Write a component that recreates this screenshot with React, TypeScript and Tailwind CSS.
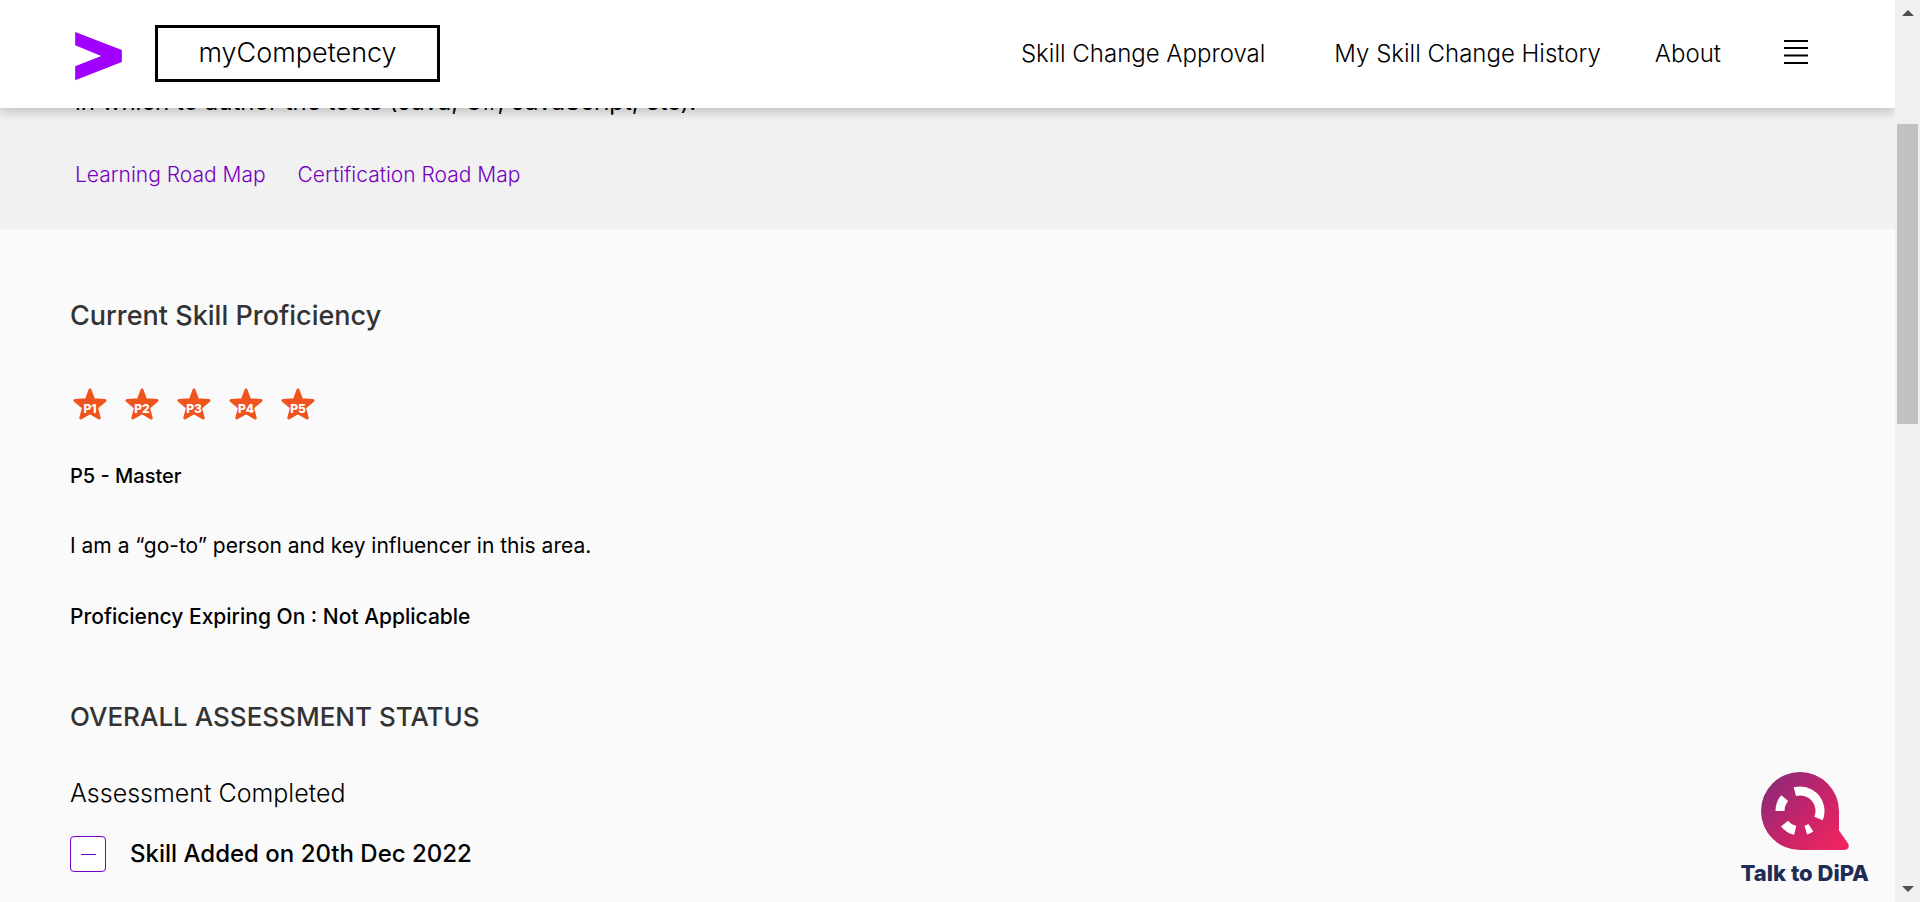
const levels = ["P1", "P2", "P3", "P4", "P5"];

function Logo() {
  return (
    <svg viewBox="0 -21 140 171" className="h-[57px] w-[47px]" aria-hidden="true">
      <path d="M0 0 140 54v36L0 145v-42l78-31L0 40Z" fill="#a100ff" />
    </svg>
  );
}

function Star({ label }: { label: string }) {
  return (
    <svg viewBox="0 0 40 32" className="h-8 w-10" role="img" aria-label={label}>
      <path
        d="M20 2 23.6 11.8 35 12.6 26.5 19.6 29.2 30 20 24.6 10.8 30 13.5 19.6 5 12.6 16.4 11.8Z"
        fill="#f0541e"
        stroke="#f0541e"
        strokeWidth="3"
        strokeLinejoin="round"
      />
      <text x="20" y="25" textAnchor="middle" fill="#fff" className="font-['Inter'] text-[12px] font-extrabold">
        {label}
      </text>
    </svg>
  );
}

function DipaIcon() {
  return (
    <svg viewBox="0 0 88 78" className="h-[78px] w-[88px]" aria-hidden="true">
      <defs>
        <linearGradient id="dipa" x1="8" y1="10" x2="78" y2="76" gradientUnits="userSpaceOnUse">
          <stop offset="0" stopColor="#8f2a78" />
          <stop offset="0.5" stopColor="#c6246a" />
          <stop offset="1" stopColor="#ee2660" />
        </linearGradient>
      </defs>
      <path
        d="M39 0A39 39 0 0 1 78 39V58.500L86.800 71Q88.600 74.200 87.200 76.200Q86 78 83 78H39A39 39 0 0 1 39 0Z"
        fill="url(#dipa)"
      />
      <circle
        cx="39"
        cy="39"
        r="20"
        fill="none"
        stroke="#fff"
        strokeWidth="9"
        pathLength="360"
        strokeDasharray="127 35 16 31 37 39 40 35"
        transform="rotate(-105 39 39)"
      />
    </svg>
  );
}

function Scrollbar() {
  return (
    <div className="flex w-[25px] shrink-0 flex-col items-center justify-between bg-[#f0f0f0] py-[10px]" aria-hidden="true">
      <svg viewBox="0 0 12 6" className="h-[6px] w-3"><path d="M6 0 12 6H0Z" fill="#505050" /></svg>
      <div className="flex w-full grow justify-center pt-[108px]">
        <div className="h-[300px] w-[21px] bg-[#c1c1c1]" />
      </div>
      <svg viewBox="0 0 12 6" className="h-[6px] w-3"><path d="M0 0H12L6 6Z" fill="#505050" /></svg>
    </div>
  );
}

export default function App() {
  return (
    <div className="flex h-screen overflow-hidden bg-[#fafafa] font-['Inter',sans-serif] text-black">
      <div className="relative flex min-w-0 grow flex-col overflow-hidden">
        <header className="relative z-10 flex h-[108px] shrink-0 items-center justify-between bg-white pr-[87px] pb-px pl-[75px] shadow-[0_4px_10px_rgba(0,0,0,0.2)]">
          <div className="flex items-center gap-[33px]">
            <Logo />
            <a href="#home" className="flex h-[57px] w-[285px] items-center justify-center border-3 border-black text-[27px] font-light">
              myCompetency
            </a>
          </div>
          <nav className="flex items-center text-[24px] font-light whitespace-nowrap">
            <a href="#approval" className="mr-[69px]">Skill Change Approval</a>
            <a href="#history" className="mr-[54px]">My Skill Change History</a>
            <a href="#about" className="mr-[63px]">About</a>
            <button type="button" aria-label="Menu">
              <svg viewBox="0 0 24 30" className="h-[30px] w-6" stroke="#000" strokeWidth="2">
                <path d="M0 2H24M0 9H24M0 16.500H24M0 24H24" />
              </svg>
            </button>
          </nav>
        </header>

        <section className="-mt-[22px] shrink-0 bg-[#f1f1f1] pb-[38px] pl-[75px] leading-8">
          <p className="text-[24px] leading-8">in which to author the tests (Java, C#, JavaScript, etc).</p>
          <div className="mt-[41px] flex gap-8 text-[21px] leading-8 font-light text-[#7500c0]">
            <a href="#learning">Learning Road Map</a>
            <a href="#certification">Certification Road Map</a>
          </div>
        </section>

        <main className="pt-[71px] pl-[70px]">
          <h2 className="text-[27px] leading-8 font-medium text-[#333]">Current Skill Proficiency</h2>
          <div className="mt-14 flex gap-3">
            {levels.map((l) => <Star key={l} label={l} />)}
          </div>
          <p className="mt-10 text-[20px] leading-8 font-medium">P5 - Master</p>
          <p className="mt-[38px] text-[21px] leading-8">I am a “go-to” person and key influencer in this area.</p>
          <p className="mt-[39px] text-[21px] leading-8 font-medium">Proficiency Expiring On : Not Applicable</p>
          <h2 className="mt-[68px] text-[26px] leading-8 font-medium text-[#333]">OVERALL ASSESSMENT STATUS</h2>
          <p className="mt-11 text-[25px] leading-8 font-light">Assessment Completed</p>
          <div className="mt-[27px] flex items-center gap-6">
            <button type="button" aria-label="Collapse" className="flex size-9 items-center justify-center rounded border border-[#7500c0] bg-white">
              <span className="h-px w-[15px] bg-[#7500c0]" />
            </button>
            <h3 className="text-[24px] leading-8 font-medium">Skill Added on 20th Dec 2022</h3>
          </div>
        </main>

        <button type="button" className="absolute right-[26px] bottom-[14px] flex flex-col items-center gap-2 text-[22px] leading-[30px] font-extrabold text-[#1f2d56]">
          <DipaIcon />
          Talk to DiPA
        </button>
      </div>
      <Scrollbar />
    </div>
  );
}
